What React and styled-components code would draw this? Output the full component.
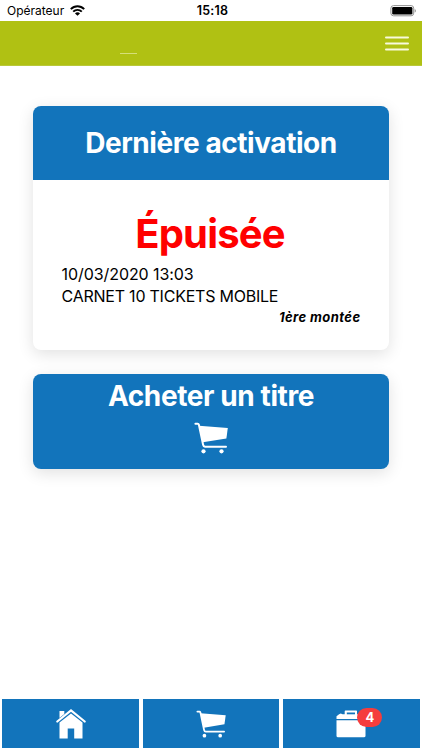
import React from 'react'
import styled, { createGlobalStyle } from 'styled-components'

const GlobalStyle = createGlobalStyle`
* {
  box-sizing: border-box;
}
body {
  margin: 0;
  background: #fff;
  color: #000;
  font-family: Inter, "Liberation Sans", sans-serif;
}
svg {
  display: block;
}
`
const Screen = styled.div`
  width: 422px;
  height: 750px;
  display: flex;
  flex-direction: column;
  overflow: hidden;
`
const StatusBar = styled.div`
  height: 21px;
  padding: 0 5px 0 7px;
  display: grid;
  grid-template-columns: 1fr auto 1fr;
  align-items: center;
  font-size: 12px;
  line-height: 21px;
`
const Carrier = styled.div`
  display: flex;
  align-items: center;
  gap: 6px;
`
const Clock = styled.div`
  padding-left: 1px;
  font-weight: 600;
  font-size: 12.5px;
  letter-spacing: 0.2px;
`
const Battery = styled.div`
  justify-self: end;
`
const TopBar = styled.header`
  height: 45px;
  padding: 0 13px 0 120px;
  display: flex;
  align-items: center;
  justify-content: space-between;
  background: #b0c113;
  border-bottom: 1px solid #b9c83a;
`
const Dash = styled.div`
  width: 17px;
  height: 1px;
  margin-top: 20px;
  background: #d5df79;
`
const MenuButton = styled.button`
  padding: 0;
  border: 0;
  background: none;
`
const Content = styled.main`
  flex: 1;
  padding: 40px 33px 0;
  display: flex;
  flex-direction: column;
  gap: 24px;
`
const Card = styled.section`
  height: 244px;
  border-radius: 8px;
  background: #fff;
  box-shadow: 0 4px 16px rgba(0, 0, 0, 0.12);
  overflow: hidden;
`
const CardHeader = styled.div`
  height: 74px;
  display: flex;
  align-items: center;
  justify-content: center;
  background: #1274bb;
`
const Title = styled.h2`
  margin: 0;
  color: #fff;
  font-size: 28px;
  font-weight: 700;
  line-height: 34px;
  letter-spacing: ${(p) => p.$spacing};
  white-space: nowrap;
`
const CardBody = styled.div`
  padding: 30px 28.5px 0;
`
const Status = styled.div`
  padding-right: 2px;
  color: #f00;
  font-size: 40px;
  font-weight: 700;
  line-height: 48px;
  text-align: center;
  letter-spacing: -0.85px;
`
const Detail = styled.div`
  margin-top: ${(p) => p.$top || '0'};
  font-size: 16px;
  line-height: 22px;
  letter-spacing: ${(p) => p.$spacing};
  white-space: nowrap;
`
const Boarding = styled.div`
  font-size: 13px;
  font-weight: 700;
  font-style: italic;
  line-height: 21px;
  text-align: right;
  letter-spacing: 0.42px;
`
const BuyButton = styled.button`
  height: 95px;
  padding: 5px 0 0;
  border: 0;
  border-radius: 8px;
  display: flex;
  flex-direction: column;
  align-items: center;
  gap: 9px;
  background: #1274bb;
  font-family: inherit;
  box-shadow: 0 4px 16px rgba(0, 0, 0, 0.12);
`
const TabBar = styled.nav`
  height: 51px;
  padding: 0 2.3px 2px;
  display: grid;
  grid-template-columns: repeat(3, 1fr);
  gap: 4px;
`
const Tab = styled.a`
  display: flex;
  align-items: center;
  justify-content: center;
  background: #1274bb;
`
const BadgeAnchor = styled.div`
  position: relative;
`
const Badge = styled.span`
  position: absolute;
  top: -2px;
  left: 21px;
  width: 25px;
  height: 19px;
  border-radius: 10px;
  background: #f53d3d;
  color: #fff;
  font-size: 13px;
  font-weight: 700;
  line-height: 19px;
  text-align: center;
`

function WifiIcon() {
  return (
    <svg width="15" height="11" viewBox="0 0 15 11" fill="none" stroke="#000" strokeWidth="1.9">
      <path d="M0.8 4.2C4.6 0.2 10.4 0.2 14.2 4.2" />
      <path d="M3.2 6.7C5.6 4.2 9.4 4.2 11.8 6.7" />
      <path d="M7.5 10.8L5 8.4C6.4 7 8.6 7 10 8.4Z" fill="#000" stroke="none" />
    </svg>
  )
}

function BatteryIcon() {
  return (
    <svg width="27" height="12" viewBox="0 0 27 12">
      <rect x="0.9" y="0.6" width="22.8" height="10.2" rx="2.6" fill="#fff" stroke="#929292" />
      <rect x="2.2" y="1.9" width="20.2" height="7.6" rx="1.3" />
      <path d="M24.7 3.9C26.3 4.4 26.3 7 24.7 7.5Z" fill="#929292" />
    </svg>
  )
}

function MenuIcon() {
  return (
    <svg width="24" height="15" viewBox="0 0 24 15" stroke="#f8fadc" strokeWidth="2" strokeLinecap="round">
      <path d="M1 1.6H23M1 7.5H23M1 13.4H23" />
    </svg>
  )
}

function CartIcon({ width, height }) {
  return (
    <svg width={width} height={height} viewBox="0 0 34 32" fill="#fff">
      <path
        d="M1.4 1.8H3.7Q4.6 1.8 4.9 2.8L9.1 22.8Q9.5 24.7 11 24.7H32"
        fill="none"
        stroke="#fff"
        strokeWidth="2"
        strokeLinecap="round"
      />
      <path d="M5 3.8L33.8 6.1L32.4 16.4L8.8 20.2Z" />
      <circle cx="9.5" cy="29.3" r="2.1" />
      <circle cx="27.5" cy="29.3" r="2.1" />
    </svg>
  )
}

function HomeIcon() {
  return (
    <svg width="30" height="30" viewBox="0 0 30 30" fill="#fff">
      <path d="M3.5 9V2H8.3V5L3.5 9Z" />
      <path d="M1.3 12.5L15 1.5L28.7 12.5" fill="none" stroke="#fff" strokeWidth="2.2" strokeLinecap="round" />
      <path d="M3.5 13.6L15 4.4L26.5 13.6V29.5H18.2V19.4H11.7V29.5H3.5Z" />
    </svg>
  )
}

function WalletIcon() {
  return (
    <svg width="30" height="28" viewBox="0 0 30 28" fill="#fff">
      <path d="M0.5 9V6.2L3.1 4.2L4.8 3.4L6.6 4.3H8.7V1.2Q8.7 0.6 9.4 0.6H20.3Q21 0.6 21 1.2V4.3H29.5V9Z" />
      <path d="M10.8 2.5H19V4.3H10.8Z" fill="#1274bb" />
      <path d="M0.5 10.3H29.5V25.7Q29.5 27.3 27.9 27.3H2.1Q0.5 27.3 0.5 25.7Z" />
    </svg>
  )
}

function App() {
  return (
    <>
      <GlobalStyle />
      <Screen>
        <StatusBar>
          <Carrier>
            <span>Opérateur</span>
            <WifiIcon />
          </Carrier>
          <Clock>15:18</Clock>
          <Battery>
            <BatteryIcon />
          </Battery>
        </StatusBar>
        <TopBar>
          <Dash />
          <MenuButton aria-label="Menu">
            <MenuIcon />
          </MenuButton>
        </TopBar>
        <Content>
          <Card>
            <CardHeader>
              <Title $spacing="-0.44px">Dernière activation</Title>
            </CardHeader>
            <CardBody>
              <Status>Épuisée</Status>
              <Detail $top="5px" $spacing="-0.07px">10/03/2020 13:03</Detail>
              <Detail $spacing="-0.23px">CARNET 10 TICKETS MOBILE</Detail>
              <Boarding>1ère montée</Boarding>
            </CardBody>
          </Card>
          <BuyButton>
            <Title $spacing="-0.4px">Acheter un titre</Title>
            <CartIcon width={34} height={32} />
          </BuyButton>
        </Content>
        <TabBar>
          <Tab>
            <HomeIcon />
          </Tab>
          <Tab>
            <CartIcon width={30} height={28} />
          </Tab>
          <Tab>
            <BadgeAnchor>
              <WalletIcon />
              <Badge>4</Badge>
            </BadgeAnchor>
          </Tab>
        </TabBar>
      </Screen>
    </>
  )
}

export default App
